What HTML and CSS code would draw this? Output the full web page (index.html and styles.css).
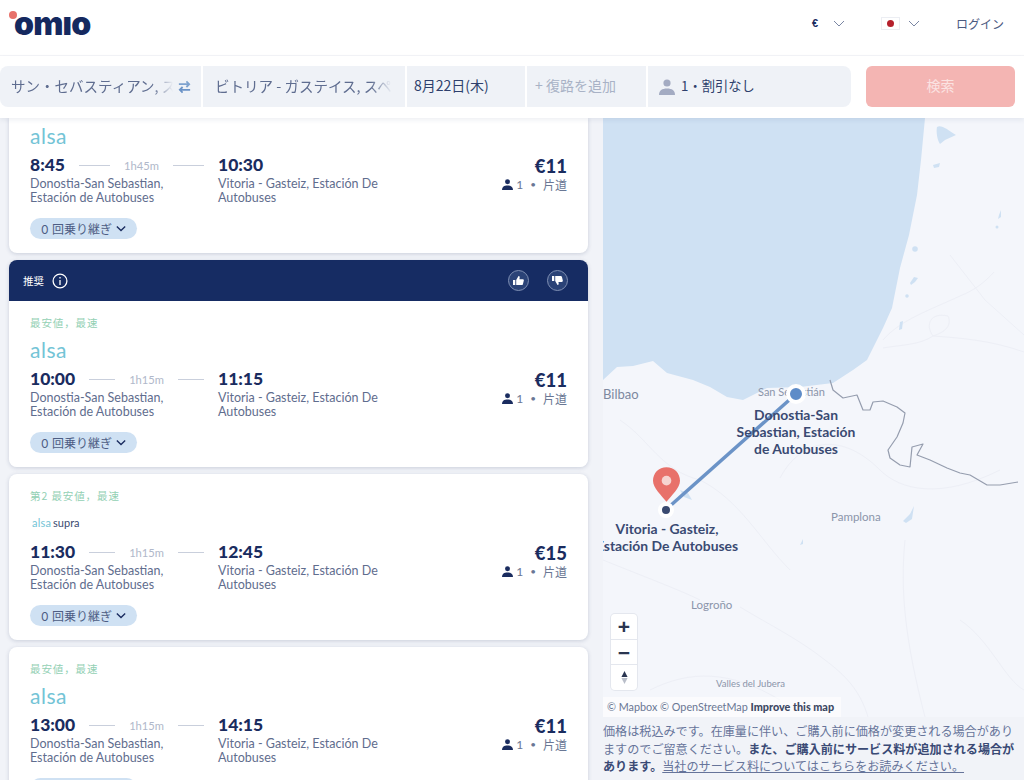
FILE: index.html
```html
<!DOCTYPE html>
<html lang="ja">
<head>
<meta charset="utf-8">
<title>Omio</title>
<link rel="stylesheet" href="styles.css">
</head>
<body>
<header class="topbar">
  <div class="logo"><span class="logo-dot"></span>omıo</div>
  <div class="top-actions">
    <span class="currency">€</span>
    <svg class="chev currency-chev" viewBox="0 0 12 7"><path d="M1 1l5 5 5-5"/></svg>
    <span class="flag"><span class="flag-sun"></span></span>
    <svg class="chev flag-chev" viewBox="0 0 12 7"><path d="M1 1l5 5 5-5"/></svg>
    <span class="login">ログイン</span>
  </div>
</header>
<section class="searchbar">
  <div class="fields">
    <div class="field f-from"><span class="fade">サン・セバスティアン, スペイン</span>
      <svg class="swap" viewBox="0 0 16 14"><path d="M2 4h11M10 1l3 3-3 3" stroke="#7fa3cf"/><path d="M14 10H3M6 7l-3 3 3 3" stroke="#6b93c7"/></svg>
    </div>
    <div class="field f-to"><span class="fade">ビトリア - ガステイス, スペイン</span></div>
    <div class="field f-date">8月22日(木)</div>
    <div class="field f-back">+ 復路を追加</div>
    <div class="field f-pax">
      <svg class="pax-icon" viewBox="0 0 16 16"><circle cx="8" cy="4" r="3.6"/><path d="M0 16c0-4.5 3-6.5 8-6.5s8 2 8 6.5z"/></svg>
      <span>1・割引なし</span>
    </div>
  </div>
  <button class="search-btn">検索</button>
</section>
<main class="main">
  <div class="list">
    <article class="card card-first">
      <div class="logo-box"><span class="alsa">alsa</span></div>
      <div class="trip">
        <div class="dep"><b class="time">8:45</b><i class="rule"></i><span class="dur">1h45m</span><i class="rule"></i></div>
        <b class="time">10:30</b>
        <div class="price">€11</div>
        <div class="station">Donostia-San Sebastian,<br>Estación de Autobuses</div>
        <div class="station">Vitoria - Gasteiz, Estación De<br>Autobuses</div>
        <div class="pax"><svg class="p" viewBox="0 0 12 12"><circle cx="6" cy="3" r="2.7"/><path d="M0 12c0-3.6 2.4-5 6-5s6 1.4 6 5z"/></svg>1<span class="bull">•</span>片道</div>
      </div>
      <div class="pill">0 回乗り継ぎ<svg viewBox="0 0 12 8"><path d="M1 1.5l5 5 5-5"/></svg></div>
    </article>

    <div class="rec">
      <div class="rec-head">
        <span class="rec-title">推奨</span>
        <svg class="info" viewBox="0 0 16 16"><circle cx="8" cy="8" r="6.9"/><path d="M8 7v5M8 4v1.6"/></svg>
        <span class="rec-space"></span>
        <span class="thumb"><svg viewBox="0 0 12 12"><path d="M0 5.5h2.5V11H0zM3.5 5.5L6 1c1.2 0 1.6 1 1.2 2.2L7 4.5h3.6c.9 0 1.4.7 1.2 1.5l-1 4c-.2.6-.7 1-1.3 1H3.5z"/></svg></span>
        <span class="thumb"><svg viewBox="0 0 12 12"><path d="M0 1h2.5v5.500H0zM3.500 6.500L6 11c1.200 0 1.600-1 1.200-2.200L7 7.500h3.600c.9 0 1.400-.7 1.200-1.500l-1-4c-.2-.6-.7-1-1.300-1H3.500z"/></svg></span>
      </div>
      <article class="card card-attached">
        <div class="tag">最安値，最速</div>
        <div class="logo-box"><span class="alsa">alsa</span></div>
        <div class="trip">
          <div class="dep"><b class="time">10:00</b><i class="rule"></i><span class="dur">1h15m</span><i class="rule"></i></div>
          <b class="time">11:15</b>
          <div class="price">€11</div>
          <div class="station">Donostia-San Sebastian,<br>Estación de Autobuses</div>
          <div class="station">Vitoria - Gasteiz, Estación De<br>Autobuses</div>
          <div class="pax"><svg class="p" viewBox="0 0 12 12"><circle cx="6" cy="3" r="2.7"/><path d="M0 12c0-3.6 2.4-5 6-5s6 1.400 6 5z"/></svg>1<span class="bull">•</span>片道</div>
        </div>
        <div class="pill">0 回乗り継ぎ<svg viewBox="0 0 12 8"><path d="M1 1.5l5 5 5-5"/></svg></div>
      </article>
    </div>

    <article class="card">
      <div class="tag">第2 最安値，最速</div>
      <div class="logo-box"><span class="alsa alsa-small">alsa</span><span class="supra">supra</span></div>
      <div class="trip">
        <div class="dep"><b class="time">11:30</b><i class="rule"></i><span class="dur">1h15m</span><i class="rule"></i></div>
        <b class="time">12:45</b>
        <div class="price">€15</div>
        <div class="station">Donostia-San Sebastian,<br>Estación de Autobuses</div>
        <div class="station">Vitoria - Gasteiz, Estación De<br>Autobuses</div>
        <div class="pax"><svg class="p" viewBox="0 0 12 12"><circle cx="6" cy="3" r="2.7"/><path d="M0 12c0-3.6 2.4-5 6-5s6 1.400 6 5z"/></svg>1<span class="bull">•</span>片道</div>
      </div>
      <div class="pill">0 回乗り継ぎ<svg viewBox="0 0 12 8"><path d="M1 1.5l5 5 5-5"/></svg></div>
    </article>

    <article class="card">
      <div class="tag">最安値，最速</div>
      <div class="logo-box"><span class="alsa">alsa</span></div>
      <div class="trip">
        <div class="dep"><b class="time">13:00</b><i class="rule"></i><span class="dur">1h15m</span><i class="rule"></i></div>
        <b class="time">14:15</b>
        <div class="price">€11</div>
        <div class="station">Donostia-San Sebastian,<br>Estación de Autobuses</div>
        <div class="station">Vitoria - Gasteiz, Estación De<br>Autobuses</div>
        <div class="pax"><svg class="p" viewBox="0 0 12 12"><circle cx="6" cy="3" r="2.7"/><path d="M0 12c0-3.6 2.4-5 6-5s6 1.400 6 5z"/></svg>1<span class="bull">•</span>片道</div>
      </div>
      <div class="pill">0 回乗り継ぎ<svg viewBox="0 0 12 8"><path d="M1 1.5l5 5 5-5"/></svg></div>
    </article>
  </div>

  <aside class="side">
    <div class="map">
      <svg class="map-art" viewBox="603 118 421 599" preserveAspectRatio="none">
        <path class="sea" d="M603 118H925L921 160 917 195 909 235 900 268 892 308 883 328 867 360 853 370 833 383 800 387 767 388 743 400 727 397 710 387 693 380 667 373 653 361 633 366 617 367 603 380Z"/>
        <g class="roads">
          <path d="M883 348C900 345 920 345 933 336 960 338 990 340 1024 352"/>
          <path d="M883 340C900 320 930 310 960 296 975 290 985 282 994 272"/>
          <path d="M933 336C925 325 930 312 948 316 952 325 946 332 933 336"/>
          <path d="M950 255L985 300 1024 335"/>
          <path d="M740 607C770 625 800 640 825 660 845 675 860 690 868 717"/>
          <path d="M603 560C640 575 680 590 700 600M905 540C900 590 905 640 925 717"/>
          <path d="M780 478C800 440 840 430 880 470 900 490 940 500 1000 470"/>
          <path d="M620 420C650 440 660 470 700 480 740 500 760 540 790 570"/>
          <path d="M650 690C690 670 730 670 780 700M960 620C990 640 1005 680 1024 690"/>
        </g>
        <g class="lakes">
          <path d="M937 127C941 124 948 130 956 135L945 140 940 144C937 140 936 131 937 127Z"/>
          <path d="M933 165L940 163 939 167 934 168Z"/>
          <path d="M999 215L1001 210 1001 217 998 219Z"/>
          <circle cx="997" cy="227" r="1.500"/>
          <circle cx="915" cy="249" r="2.800"/>
          <path d="M910 283L914 277 918 278 915 282 911 285Z"/>
          <circle cx="907" cy="296" r="1.800"/>
          <path d="M899 330L900 322 903 321 902 329Z"/>
          <path d="M903 521L910 514 914 506 912 519 906 523Z"/>
          <path d="M800 545L803 539 803 544Z"/>
          <path d="M680 490L688 493 692 500 684 497Z"/>
        </g>
        <path class="border" d="M830 380L833 390 843 398 857 395 863 410 870 410 873 402 883 401 897 407 905 413 903 423 897 437 888 450 890 458 900 465 910 467 912 447 923 444 917 455 930 460 947 468 960 473 970 475 987 485 1000 485 1018 482"/>
        <path class="route" d="M796 394L670 506"/>
      </svg>

      <span class="place bilbao">Bilbao</span>
      <span class="place sansebastian">San Sebastián</span>
      <span class="place pamplona">Pamplona</span>
      <span class="place logrono">Logroño</span>
      <span class="place valles">Valles del Jubera</span>

      <span class="dot dot-from"></span>
      <span class="dot dot-to"></span>
      <svg class="pin" viewBox="0 0 28 36"><path d="M14 0C6 0 0 6 0 14c0 8 9 15 14 22 5-7 14-14 14-22C28 6 22 0 14 0z"/><circle cx="14" cy="14" r="5" /></svg>

      <span class="stop stop-from">Donostia-San<br>Sebastian, Estación<br>de Autobuses</span>
      <span class="stop stop-to">Vitoria - Gasteiz,<br>Estación De Autobuses</span>

      <div class="zoomer">
        <span class="z z-plus">+</span>
        <span class="z z-minus">−</span>
        <span class="z z-north"><svg viewBox="0 0 8 15"><path class="n" d="M4 0l3.500 7h-7z"/><path class="s" d="M4 15L.5 8h7z"/></svg></span>
      </div>
      <div class="attrib">© Mapbox © OpenStreetMap <b>Improve this map</b></div>
    </div>
    <p class="note">価格は税込みです。在庫量に伴い、ご購入前に価格が変更される場合がありますのでご留意ください。<b>また、ご購入前にサービス料が追加される場合があります。</b><a>当社のサービス料についてはこちらをお読みください。</a></p>
  </aside>
</main>
</body>
</html>
```
FILE: styles.css
```css
* { box-sizing: border-box; }
html, body { margin: 0; height: 780px; overflow: hidden; }
body {
  background: #f1f3f8;
  color: #1a2c5f;
  font-family: "Lato", "Noto Sans CJK JP", sans-serif;
}

/* header */
.topbar {
  height: 56px;
  background: #fff;
  border-bottom: 1px solid #f4f5f8;
  display: flex;
  justify-content: space-between;
  align-items: center;
  padding: 0 20px 0 14px;
}
.logo {
  position: relative;
  font-family: "Inter", sans-serif;
  font-weight: 900;
  font-size: 32px;
  line-height: 38px;
  letter-spacing: -.8px;
  color: #15295f;
  margin-top: -7px;
}
.logo-dot {
  position: absolute;
  left: -5px;
  top: 6px;
  width: 8px;
  height: 8px;
  border-radius: 50%;
  background: #e8716a;
}
.top-actions { display: flex; align-items: center; margin-top: -9px; }
.currency { font-family: "Liberation Sans", sans-serif; font-size: 11px; font-weight: 700; color: #1a2c5f; width: 21px; }
.chev { width: 12px; height: 7px; fill: none; stroke: #7a86a3; stroke-width: 1; }
.currency-chev { margin-right: 36px; }
.flag {
  width: 19px;
  height: 13px;
  background: #fff;
  border: 1px solid #eceef3;
  display: flex;
  align-items: center;
  justify-content: center;
  margin-right: 8px;
}
.flag-sun { width: 7px; height: 7px; border-radius: 50%; background: #b5202c; }
.flag-chev { margin-right: 36px; }
.login { font-size: 12px; color: #4b5a7f; font-family: "Noto Sans CJK JP", sans-serif; }

/* search */
.searchbar {
  position: relative;
  z-index: 2;
  height: 62px;
  background: #fff;
  display: flex;
  padding: 10px 9px 11px 0;
  justify-content: space-between;
  box-shadow: 0 2px 5px rgba(30, 45, 90, .08);
  font-family: "Noto Sans CJK JP", sans-serif;
}
.fields { display: flex; gap: 2px; width: 851px; }
.field {
  background: #eff2f7;
  display: flex;
  align-items: center;
  font-size: 14.5px;
  color: #5f6d90;
  white-space: nowrap;
  overflow: hidden;
  padding-bottom: 3px;
}
.f-from { width: 201px; padding-left: 11px; border-radius: 8px 0 0 8px; justify-content: space-between; padding-right: 9px; }
.f-to { width: 202px; padding-left: 12px; }
.f-date { width: 118px; padding-left: 7px; color: #2e3f6c; font-size: 14px; }
.f-back { width: 119px; padding-left: 8px; color: #a9b2c6; font-size: 14px; }
.f-pax { flex: 1; padding-left: 11px; border-radius: 0 8px 8px 0; color: #2e3f6c; font-size: 13.300px; gap: 6px; }
.fade {
  overflow: hidden;
  flex: 0 0 auto;
  width: 177px;
  -webkit-mask-image: linear-gradient(90deg, #000 88%, transparent 100%);
  mask-image: linear-gradient(90deg, #000 88%, transparent 100%);
}
.f-from .fade { width: 162px; }
.swap { width: 15px; height: 14px; fill: none; stroke-width: 1.900; flex: none; margin-top: 3px; }
.pax-icon { width: 16px; height: 16px; fill: #a3abc2; margin-top: 3px; }
.search-btn {
  width: 149px;
  border: 0;
  border-radius: 6px;
  background: #f4b5b3;
  color: #fbe3e2;
  padding: 0 0 3px;
  font: 14px "Noto Sans CJK JP", sans-serif;
}

/* list */
.main { display: flex; height: 662px; }
.list {
  width: 603px;
  flex: none;
  height: 662px;
  overflow: hidden;
  padding: 0 15px 0 9px;
  display: flex;
  flex-direction: column;
  gap: 7px;
}
.card {
  flex: none;
  background: #fff;
  border-radius: 8px;
  padding: 14px 21px 14px;
  box-shadow: 0 1px 4px rgba(30, 45, 90, .18);
}
.card-first { margin-top: -1px; padding-top: 0; border-radius: 0 0 8px 8px; }
.card-attached { border-radius: 0 0 8px 8px; box-shadow: none; }
.rec { flex: none; border-radius: 8px; box-shadow: 0 1px 4px rgba(30, 45, 90, .18); }
.rec-head {
  height: 41px;
  background: #162c63;
  border-radius: 8px 8px 0 0;
  display: flex;
  align-items: center;
  padding: 0 20px 0 14px;
  color: #fff;
}
.rec-title { font-size: 10.500px; margin-right: 8px; font-family: "Noto Sans CJK JP", sans-serif; }
.info { width: 16px; height: 16px; fill: none; stroke: #fff; stroke-width: 1.300; }
.rec-space { flex: 1; }
.thumb {
  width: 21px;
  height: 21px;
  border-radius: 50%;
  background: #2b4377;
  border: 1px solid #7f8fb3;
  display: flex;
  align-items: center;
  justify-content: center;
  margin-left: 18px;
}
.thumb svg { width: 11px; height: 11px; fill: #fff; }

.tag {
  height: 16px;
  font-size: 10.500px;
  line-height: 16px;
  color: #93d0b4;
  letter-spacing: .9px;
  font-family: "Noto Sans CJK JP", sans-serif;
}
.logo-box { height: 37px; display: flex; align-items: center; }
.alsa {
  font-family: "Lato", sans-serif;
  font-size: 21px;
  letter-spacing: .5px;
  color: #73c4d6;
  line-height: 20px;
}
.alsa-small { font-size: 11px; letter-spacing: .2px; margin-left: 2px; }
.supra { font-size: 11px; color: #3a4a70; margin-left: 2px; }

.trip {
  display: grid;
  grid-template-columns: 188px 1fr auto;
  grid-template-rows: 22px auto;
  color: #5f6d8e;
}
.dep { display: flex; align-items: center; }
.time {
  font-family: "Lato", sans-serif;
  font-weight: 900;
  font-size: 17.500px;
  line-height: 22px;
  color: #1a2c5f;
}
.rule { flex: 1; height: 1px; background: #c9cfdc; margin: 0 14px; }
.dur { font-size: 11.200px; color: #b0b8ca; }
.price {
  text-align: right;
  font-family: "Lato", sans-serif;
  font-weight: 900;
  font-size: 18.500px;
  line-height: 22px;
  color: #1a2c5f;
  margin: 1px 0 0 0;
}
.station { font-size: 12.500px; line-height: 14px; color: #5f6d8e; margin-top: 1px; }
.pax {
  display: flex;
  align-items: center;
  justify-content: flex-end;
  height: 14px;
  margin-top: 1px;
  font-size: 12px;
  color: #6a7794;
  font-family: "Lato", "Noto Sans CJK JP", sans-serif;
}
.p { width: 11px; height: 11px; fill: #1a2c5f; margin-right: 3px; }
.bull { margin: 0 7px; font-size: 10px; }
.pill {
  display: inline-flex;
  align-items: center;
  margin-top: 13px;
  height: 21px;
  width: 107px;
  padding-left: 11px;
  border-radius: 11px;
  background: #cfe1f3;
  color: #4d5d83;
  font-size: 12px;
  font-family: "Inter", "Noto Sans CJK JP", sans-serif;
  white-space: nowrap;
}
.pill svg { width: 10px; height: 7px; fill: none; stroke: #1a2c5f; stroke-width: 1.600; margin-left: 4px; flex: none; }

/* map */
.side { flex: 1; min-width: 0; }
.map {
  position: relative;
  height: 599px;
  overflow: hidden;
  background: #f4f6fb;
}
.map-art { position: absolute; inset: 0; width: 100%; height: 100%; }
.sea { fill: #cfe1f3; }
.lakes { fill: #cfe1f3; }
.roads { fill: none; stroke: #edeff6; stroke-width: 1; }
.border { fill: none; stroke: #959dae; stroke-width: 1.200; stroke-linejoin: round; }
.route { stroke: #6b93c7; stroke-width: 3.500; fill: none; }
.place { position: absolute; color: #8b95aa; font-size: 11.500px; line-height: 14px; white-space: nowrap; }
.bilbao { left: 0; top: 269px; font-size: 13px; color: #7d889f; }
.sansebastian { left: 155px; top: 267px; font-size: 11px; }
.pamplona { left: 228px; top: 392px; }
.logrono { left: 88px; top: 480px; }
.valles { left: 113px; top: 559px; font-size: 9.500px; }
.dot { position: absolute; border-radius: 50%; border: 4px solid #fff; }
.dot-from { left: 183px; top: 266px; width: 20px; height: 20px; background: #5e8cc8; }
.dot-to { left: 55px; top: 384px; width: 16px; height: 16px; background: #3a4a70; }
.pin { position: absolute; left: 50px; top: 349px; width: 27px; height: 35px; fill: #e8716a; }
.pin circle { fill: #f6d4d0; }
.stop {
  position: absolute;
  text-align: center;
  font-size: 13.900px;
  line-height: 17px;
  font-weight: 700;
  color: #3a4a72;
  white-space: nowrap;
  transform: translateX(-50%);
}
.stop-from { left: 193px; top: 288px; }
.stop-to { left: 64px; top: 402px; }
.zoomer {
  position: absolute;
  left: 8px;
  top: 496px;
  width: 26px;
  height: 76px;
  background: #fff;
  border-radius: 4px;
  box-shadow: 0 0 0 1px #e4e7ee;
  display: flex;
  flex-direction: column;
}
.z {
  flex: 1;
  display: flex;
  align-items: center;
  justify-content: center;
  color: #2a3550;
  font: 700 21px/1 "Liberation Sans", sans-serif;
  border-bottom: 1px solid #e4e7ee;
}
.z-north { border: 0; }
.z-north svg { width: 7px; height: 15px; }
.n { fill: #2a3550; }
.s { fill: #b9bec9; }
.attrib {
  position: absolute;
  left: 0;
  bottom: 0;
  height: 20px;
  width: 238px;
  padding-left: 4px;
  background: rgba(255, 255, 255, .6);
  font-size: 10.800px;
  line-height: 20px;
  color: #6a7794;
  white-space: nowrap;
}
.attrib b { color: #3d4863; font-weight: 900; }
.note {
  margin: 5px 0 0 0;
  width: 416px;
  font-size: 12.100px;
  line-height: 17.500px;
  color: #66749a;
  font-family: "Noto Sans CJK JP", sans-serif;
}
.note b { color: #3a4a75; font-weight: 700; }
.note a { color: #66749a; text-decoration: underline; }
```
